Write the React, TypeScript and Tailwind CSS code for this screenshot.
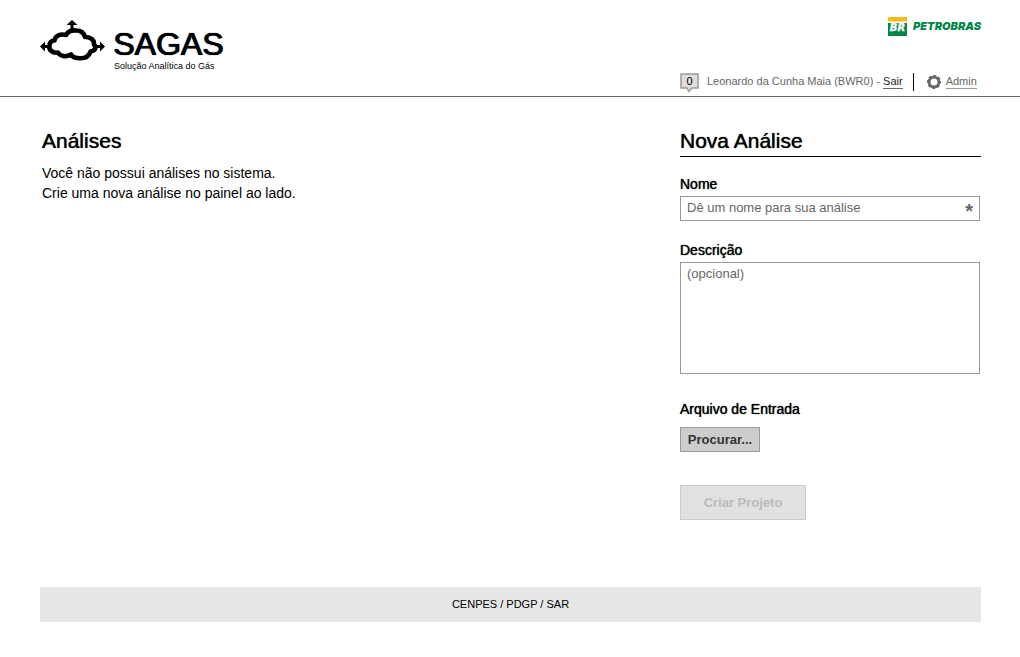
function CloudLogo() {
  return (
    <svg className="h-[42px] w-[65px] shrink-0" viewBox="0 0 65 42" aria-hidden="true">
      <path
        d="M14.500 20.500C15 16 20 13.500 26 15C28 11.500 32 10 36 10.500C40.500 10.500 44 13 45 17C50 17 54.500 19.500 54 24.500C57 27.500 55 31 50.500 31.500C49 36 45 38.500 40 38.300C36 38.300 32.500 37 31 34.500C27 37 20.500 37 18 32.500C13 33.500 8.500 30 9.500 26C9.500 22.500 11.500 20.500 14.500 20.500Z"
        fill="white"
        stroke="black"
        strokeWidth="4.600"
        strokeLinejoin="round"
      />
      <path d="M32 0L37.500 5H33.500V11H30.500V5H26.500Z" />
      <path d="M0 26.500L5 21.500V25H10V28H5V31.500Z" />
      <path d="M65 26.500L60 21.500V25H54V28H60V31.500Z" />
    </svg>
  );
}

function GearIcon() {
  return (
    <svg className="size-[14px] shrink-0" viewBox="0 0 14 14" fill="none" stroke="#666666" aria-hidden="true">
      <circle cx="7" cy="7" r="4.900" strokeWidth="2.800" />
      <circle cx="7" cy="7" r="6.400" strokeWidth="1.300" strokeDasharray="2.900 2.126" strokeDashoffset="1.450" />
    </svg>
  );
}

function NoticeCount() {
  return (
    <button type="button" aria-label="0 avisos" className="relative h-5 w-[19px] text-[11px] leading-4 text-black">
      <svg className="absolute inset-0" width="19" height="20" viewBox="0 0 19 20" aria-hidden="true">
        <path d="M1 1H18V15H12L9 18.500L7 15H1Z" fill="#dddddd" stroke="#999999" strokeWidth="1.500" />
      </svg>
      <span className="absolute inset-x-0 top-0">0</span>
    </button>
  );
}

function Petrobras() {
  return (
    <div className="flex items-center gap-1.5">
      <svg className="h-[19px] w-[19px]" viewBox="0 0 19 19" aria-hidden="true">
        <rect width="19" height="4.500" fill="#fdb913" />
        <rect y="6" width="19" height="13" fill="#00854a" />
        <text
          x="9.500"
          y="14"
          textAnchor="middle"
          fill="white"
          stroke="white"
          strokeWidth="0.400"
          fontFamily="DejaVu Sans"
          fontSize="10"
          fontWeight="700"
          fontStyle="italic"
        >
          BR
        </text>
      </svg>
      <span className="font-['Inter',sans-serif] text-[11px] leading-[19px] font-black text-[#00854a] italic">PETROBRAS</span>
    </div>
  );
}

const label = "block text-[14px] leading-4 text-black [text-shadow:0_0_1px_#000]";
const title = "text-[21px] leading-6 text-black [text-shadow:0_0_1px_#000]";

export default function App() {
  return (
    <div className="min-h-screen bg-white font-['Liberation_Sans',Arial,sans-serif] text-black">
      <header className="flex h-[97px] justify-between border-b border-[#666666] pr-[39px] pl-10">
        <div className="flex gap-2 pt-5">
          <CloudLogo />
          <div className="pt-2">
            <div className="text-[32px] leading-8 [text-shadow:0_0_1px_#000,1px_0_0_#000]">SAGAS</div>
            <div className="pl-px text-[9px] leading-3">Solução Analítica do Gás</div>
          </div>
        </div>
        <div className="flex w-[301px] flex-col justify-between pt-[17px]">
          <div className="flex justify-end">
            <Petrobras />
          </div>
          <div className="flex h-[23px] items-start text-[11px] leading-4 text-[#666666]">
            <NoticeCount />
            <span className="pl-2">
              Leonardo da Cunha Maia (BWR0) -{" "}
              <a href="#sair" className="inline-block border-b border-[#666666] leading-[14px] text-[#222222]">
                Sair
              </a>
            </span>
            <span className="mr-[13px] ml-2.5 h-[18px] w-px bg-black" />
            <a href="#admin" className="flex items-center gap-[5px] pt-px">
              <GearIcon />
              <span className="border-b border-[#999999] leading-[14px]">Admin</span>
            </a>
          </div>
        </div>
      </header>

      <main className="flex min-h-[490px] justify-between gap-10 pt-8 pr-[39px] pl-10">
        <section className="pl-0.5">
          <h1 className={title}>Análises</h1>
          <p className="mt-2.5 text-[14px] leading-5">
            Você não possui análises no sistema.
            <br />
            Crie uma nova análise no painel ao lado.
          </p>
        </section>

        <form className="w-[301px]" onSubmit={(e) => e.preventDefault()}>
          <h2 className={`${title} border-b border-black pb-[3px]`}>Nova Análise</h2>
          <div className="mt-[19px]">
            <label htmlFor="nome" className={label}>
              Nome
            </label>
            <div className="mt-1 flex h-[25px] w-[300px] border border-[#999999] px-1.5">
              <input
                id="nome"
                type="text"
                required
                placeholder="Dê um nome para sua análise"
                className="h-[21px] min-w-0 flex-1 text-[13px] shadow-none outline-none placeholder:text-[#666666]"
              />
              <span aria-hidden="true" className="text-[20px] leading-7 font-bold text-[#666666]">
                *
              </span>
            </div>
          </div>
          <div className="mt-[21px]">
            <label htmlFor="descricao" className={label}>
              Descrição
            </label>
            <textarea
              id="descricao"
              placeholder="(opcional)"
              className="mt-1 block h-28 w-[300px] resize-none border border-[#999999] px-1.5 py-[3px] text-[13px] leading-4 outline-none placeholder:text-[#666666]"
            />
          </div>
          <div className="mt-[27px]">
            <span id="arquivo" className={label}>
              Arquivo de Entrada
            </span>
            <button
              type="button"
              aria-describedby="arquivo"
              className="mt-2.5 block h-[25px] w-20 border border-[#999999] bg-[#cccccc] px-1.5 text-[13px] leading-[22px] font-bold text-[#333333]"
            >
              Procurar...
            </button>
          </div>
          <button
            type="submit"
            disabled
            className="mt-[33px] block h-[35px] w-[126px] border border-[#cccccc] bg-[#e1e1e1] text-[13px] leading-8 font-bold text-[#bbbbbb]"
          >
            Criar Projeto
          </button>
        </form>
      </main>

      <footer className="mr-[39px] ml-10 h-[35px] bg-[#e7e7e7] text-center text-[11px] leading-[35px]">CENPES / PDGP / SAR</footer>
    </div>
  );
}
